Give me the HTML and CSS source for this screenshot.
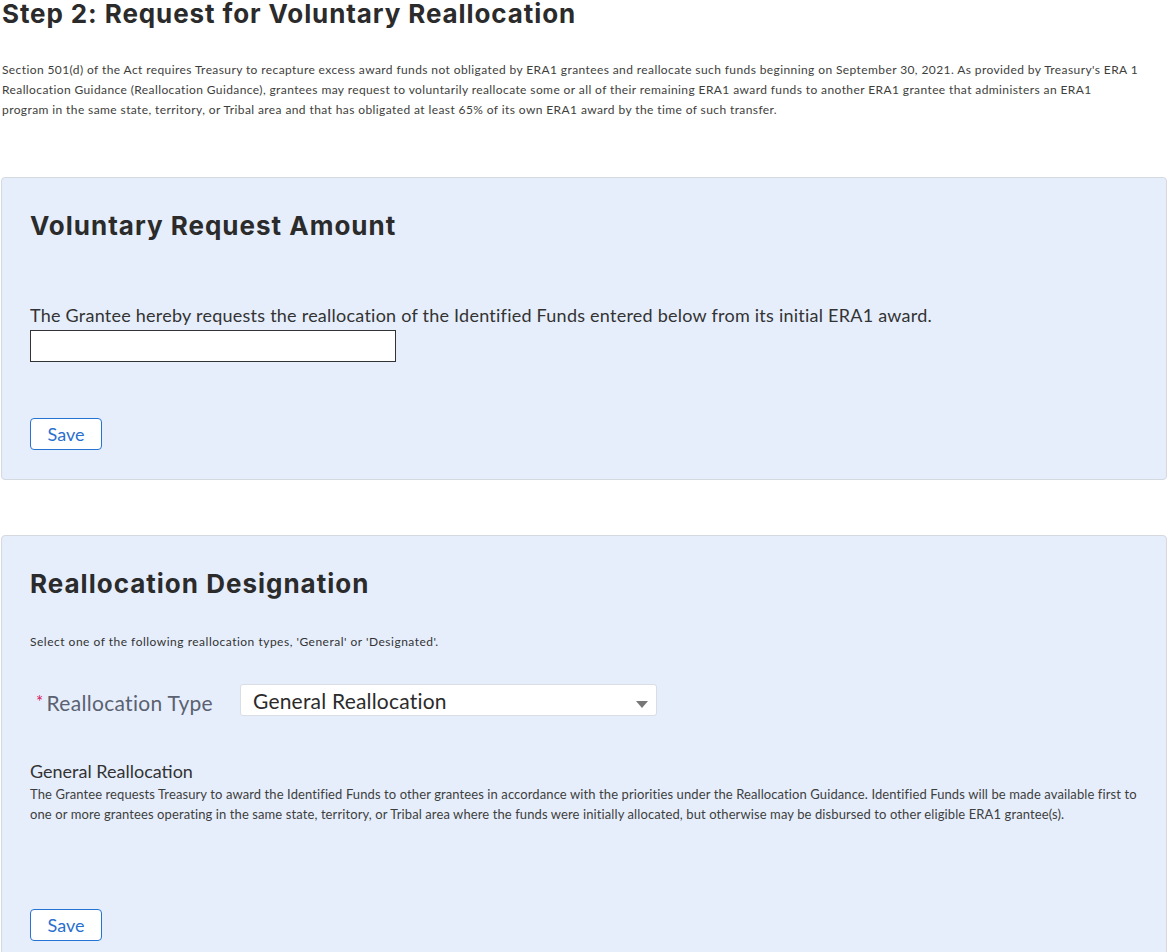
FILE: index.html
```html
<!DOCTYPE html>
<html lang="en">
  <head>
    <meta charset="UTF-8" />
    <meta name="viewport" content="width=device-width, initial-scale=1.0" />
    <title>Step 2: Request for Voluntary Reallocation</title>
    <link rel="stylesheet" href="styles.css">
  </head>
  <body>
    <div class="page">
      <h1 class="step-title">Step 2: Request for Voluntary Reallocation</h1>
      <p class="intro">
        Section 501(d) of the Act requires Treasury to recapture excess award funds not obligated by ERA1 grantees and reallocate such funds beginning on September 30, 2021. As provided by Treasury's ERA 1 Reallocation Guidance (Reallocation Guidance), grantees may request to voluntarily reallocate some or all of their remaining ERA1 award funds to another ERA1 grantee that administers an ERA1 program in the same state, territory, or Tribal area and that has obligated at least 65% of its own ERA1 award by the time of such transfer.
      </p>

      <div class="panel amount-panel">
        <h2 class="panel-title">Voluntary Request Amount</h2>
        <label class="amount-label" for="amount">The Grantee hereby requests the reallocation of the Identified Funds entered below from its initial ERA1 award.</label>
        <input type="text" id="amount" class="amount-input" />
        <button class="save-btn">Save</button>
      </div>

      <div class="panel designation-panel">
        <h2 class="panel-title">Reallocation Designation</h2>
        <p class="small-text">Select one of the following reallocation types, 'General' or 'Designated'.</p>
        <div class="type-row">
          <label class="type-label"><span class="required">*</span>Reallocation Type</label>
          <div class="select-box">
            <span>General Reallocation</span>
            <span class="caret"></span>
          </div>
        </div>
        <h3 class="type-title">General Reallocation</h3>
        <p class="type-desc">
          The Grantee requests Treasury to award the Identified Funds to other grantees in accordance with the priorities under the Reallocation Guidance. Identified Funds will be made available first to one or more grantees operating in the same state, territory, or Tribal area where the funds were initially allocated, but otherwise may be disbursed to other eligible ERA1 grantee(s).
        </p>
        <button class="save-btn">Save</button>
      </div>
    </div>
  </body>
</html>
```

FILE: styles.css
```css
* {
  margin: 0;
  padding: 0;
  box-sizing: border-box;
  font-family: Lato, "Open Sans", sans-serif;
}
body {
  background-color: #fff;
  color: #3e3e3c;
}
.page {
  padding: 0 8px 0 1px;
}
.step-title {
  font-family: Inter, "Open Sans", sans-serif;
  font-weight: 700;
  font-size: 26px;
  line-height: 28px;
  letter-spacing: 0.9px;
  color: #2b2b2b;
  padding-left: 1px;
}
.intro {
  margin-top: 32px;
  padding-left: 1px;
  padding-right: 27px;
  font-size: 12px;
  line-height: 20px;
  letter-spacing: 0.4px;
  color: #3e3e3c;
}
.panel {
  background-color: #e6eefc;
  border: 1px solid #d4d9e0;
  border-radius: 4px;
  padding: 31px 28px 29px;
  display: flex;
  flex-direction: column;
  align-items: flex-start;
}
.amount-panel {
  margin-top: 57px;
}
.designation-panel {
  margin-top: 55px;
  padding-bottom: 40px;
}
.panel-title {
  font-family: Inter, "Open Sans", sans-serif;
  font-weight: 700;
  font-size: 26px;
  line-height: 34px;
  letter-spacing: 1px;
  color: #2b2b2b;
}
.amount-label {
  margin-top: 59px;
  font-size: 18px;
  line-height: 27px;
  letter-spacing: 0.24px;
  color: #333;
}
.amount-input {
  width: 366px;
  height: 32px;
  border: 1px solid #333;
  background: #fff;
  margin-top: 1px;
}
.save-btn {
  margin-top: 56px;
  width: 72px;
  height: 32px;
  background: #fff;
  border: 1px solid #2574d4;
  border-radius: 4px;
  color: #2a6fce;
  font-size: 18px;
  cursor: pointer;
}
.small-text {
  margin-top: 31px;
  font-size: 12px;
  line-height: 20px;
  letter-spacing: 0.5px;
  color: #333;
}
.type-row {
  margin-top: 32px;
  display: flex;
  align-items: center;
}
.type-label {
  width: 210px;
  padding-left: 6px;
  padding-top: 4px;
  font-size: 21px;
  letter-spacing: 0.3px;
  color: #5b6170;
  display: flex;
  align-items: flex-start;
}
.required {
  color: #d8195c;
  font-size: 17px;
  line-height: 17px;
  margin-top: 3px;
  margin-right: 3px;
}
.select-box {
  width: 417px;
  height: 32px;
  background: #fff;
  border: 1px solid #d8dde6;
  border-radius: 3px;
  display: flex;
  align-items: center;
  justify-content: space-between;
  padding: 0 8px 0 12px;
  font-size: 21px;
  letter-spacing: 0.2px;
  color: #2b2b2b;
}
.caret {
  width: 0;
  height: 0;
  border-left: 6px solid transparent;
  border-right: 6px solid transparent;
  border-top: 7px solid #777;
  margin-top: 8px;
}
.type-title {
  margin-top: 43px;
  font-weight: 400;
  font-size: 18px;
  line-height: 25px;
  color: #333;
}
.type-desc {
  font-size: 13px;
  line-height: 20px;
  letter-spacing: 0.1px;
  color: #3e3e3c;
}
.designation-panel .save-btn {
  margin-top: 85px;
}
```
